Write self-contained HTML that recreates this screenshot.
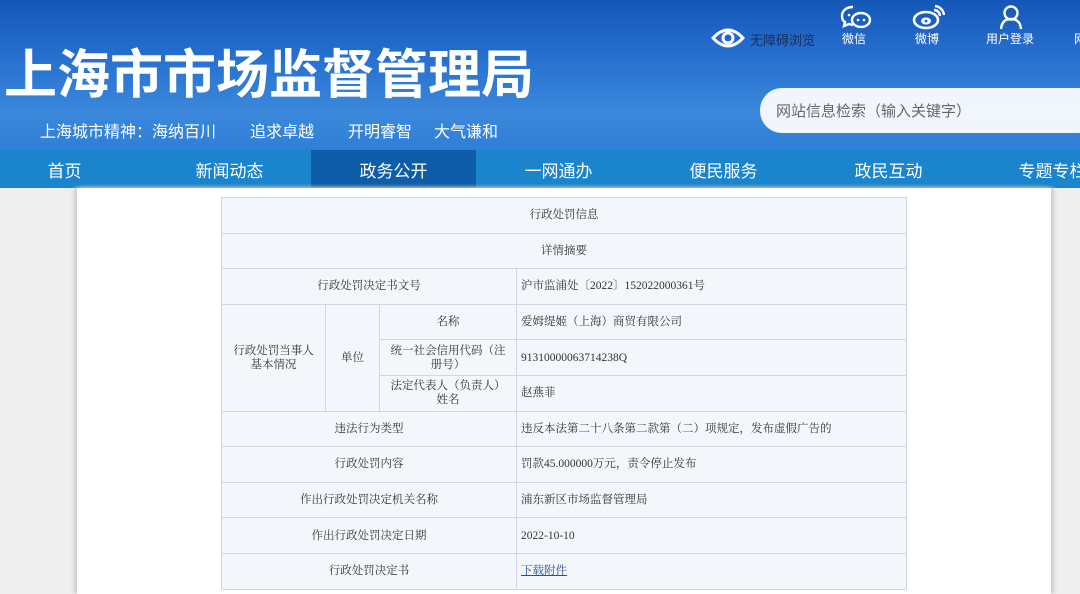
<!DOCTYPE html>
<html><head><meta charset="utf-8"><style>
*{margin:0;padding:0;box-sizing:border-box}
body{width:1080px;height:594px;overflow:hidden;background:#efefef;font-family:"Liberation Sans","Noto Sans CJK SC",sans-serif;position:relative}
.hdr{position:absolute;left:0;top:0;width:1080px;height:150px;background:linear-gradient(180deg,#1557b8 0%,#2a74d2 45%,#3b88dc 75%,#2f7fd6 100%)}
.title{position:absolute;left:4px;top:44px;font-size:53px;font-weight:bold;color:#fff;letter-spacing:0;white-space:nowrap;line-height:64px}
.sub{position:absolute;left:40px;top:118px;font-size:16px;color:#fff;white-space:nowrap}
.sub span{margin-right:34px}
.search{position:absolute;left:760px;top:88px;width:340px;height:45px;border-radius:22px;background:rgba(255,255,255,.93);font-size:15px;color:#666;padding:12px 0 0 16px}
.ic{position:absolute;color:#fff;font-size:12px;text-align:center;white-space:nowrap}
.nav{position:absolute;left:0;top:150px;width:1080px;height:38px;background:#1a84cc}
.nav div{position:absolute;top:0;width:165px;height:38px;line-height:44px;text-align:center;color:#fff;font-size:17px}
.nav .on{background:#0d5da8}
.panel{position:absolute;left:77px;top:188px;width:974px;height:406px;background:#fff;box-shadow:-3px 0 4px #ccc,3px 0 4px #ccc}
table{position:absolute;left:221px;top:197px;width:686px;border-collapse:collapse;font-family:"Liberation Serif","Noto Serif CJK SC",serif;font-size:11.5px;color:#333}
td{border:1px solid #cfd9e4;background:#f3f7fb;height:35.6px;text-align:center;line-height:14px}
td.v{text-align:left;padding-left:4px}
a{color:#2a4f9a;text-decoration:underline}
</style></head><body>
<div class="hdr">
<div class="title">上海市市场监督管理局</div>
<div class="sub"><span>上海城市精神：海纳百川</span><span>追求卓越</span><span style="margin-right:22px">开明睿智</span><span>大气谦和</span></div>
<svg style="position:absolute;left:711px;top:26px" width="34" height="24" viewBox="0 0 34 24"><path d="M2 12 Q17 -4 32 12 Q17 28 2 12Z" fill="none" stroke="#fff" stroke-width="3"/><circle cx="17" cy="12" r="5" fill="none" stroke="#fff" stroke-width="3"/></svg>
<div class="ic" style="left:750px;top:30px;color:#1a2f5a;font-size:13px">无障碍浏览</div>
<svg style="position:absolute;left:840px;top:5px" width="32" height="26" viewBox="0 0 32 26"><path d="M13 2C6 2 2 6 2 11c0 3 1 5 3 6l-1 4 5-2c1 0 3 1 4 1" fill="none" stroke="#fff" stroke-width="2.4"/><ellipse cx="21" cy="15" rx="9" ry="7" fill="none" stroke="#fff" stroke-width="2.4"/><circle cx="18" cy="15" r="1.3" fill="#fff"/><circle cx="24" cy="15" r="1.3" fill="#fff"/><circle cx="9" cy="10" r="1.3" fill="#fff"/></svg>
<div class="ic" style="left:842px;top:30px">微信</div>
<svg style="position:absolute;left:912px;top:4px" width="34" height="26" viewBox="0 0 34 26"><ellipse cx="14" cy="16" rx="12" ry="8" fill="none" stroke="#fff" stroke-width="2.6"/><ellipse cx="14" cy="17" rx="5" ry="3.5" fill="#fff"/><circle cx="14" cy="17" r="1.5" fill="#2a6cc8"/><path d="M22 6a6 6 0 0 1 6 6M23 2a10 10 0 0 1 9 9" fill="none" stroke="#fff" stroke-width="2.4"/></svg>
<div class="ic" style="left:915px;top:30px">微博</div>
<svg style="position:absolute;left:998px;top:4px" width="26" height="26" viewBox="0 0 26 26"><circle cx="13" cy="9" r="6.5" fill="none" stroke="#fff" stroke-width="2.4"/><path d="M3 25Q4 15 13 15Q22 15 23 25" fill="none" stroke="#fff" stroke-width="2.4"/></svg>
<div class="ic" style="left:986px;top:30px">用户登录</div>
<div class="ic" style="left:1074px;top:30px">网</div>
<div class="search">网站信息检索（输入关键字）</div>
</div>
<div class="nav">
<div style="left:-18px">首页</div><div style="left:147px">新闻动态</div><div class="on" style="left:311px">政务公开</div><div style="left:476px">一网通办</div><div style="left:641px">便民服务</div><div style="left:806px">政民互动</div><div style="left:970px">专题专栏</div>
</div>
<div class="panel"></div>
<table>
<tr><td colspan="4">行政处罚信息</td></tr>
<tr><td colspan="4">详情摘要</td></tr>
<tr><td colspan="3">行政处罚决定书文号</td><td class="v">沪市监浦处〔2022〕152022000361号</td></tr>
<tr><td rowspan="3" style="width:104px">行政处罚当事人<br>基本情况</td><td rowspan="3" style="width:54px">单位</td><td style="width:137px">名称</td><td class="v">爱姆缇姬（上海）商贸有限公司</td></tr>
<tr><td>统一社会信用代码（注<br>册号）</td><td class="v">91310000063714238Q</td></tr>
<tr><td>法定代表人（负责人）<br>姓名</td><td class="v">赵燕菲</td></tr>
<tr><td colspan="3">违法行为类型</td><td class="v">违反本法第二十八条第二款第（二）项规定，发布虚假广告的</td></tr>
<tr><td colspan="3">行政处罚内容</td><td class="v">罚款45.000000万元，责令停止发布</td></tr>
<tr><td colspan="3">作出行政处罚决定机关名称</td><td class="v">浦东新区市场监督管理局</td></tr>
<tr><td colspan="3">作出行政处罚决定日期</td><td class="v">2022-10-10</td></tr>
<tr><td colspan="3">行政处罚决定书</td><td class="v"><a>下载附件</a></td></tr>
</table>
</body></html>
